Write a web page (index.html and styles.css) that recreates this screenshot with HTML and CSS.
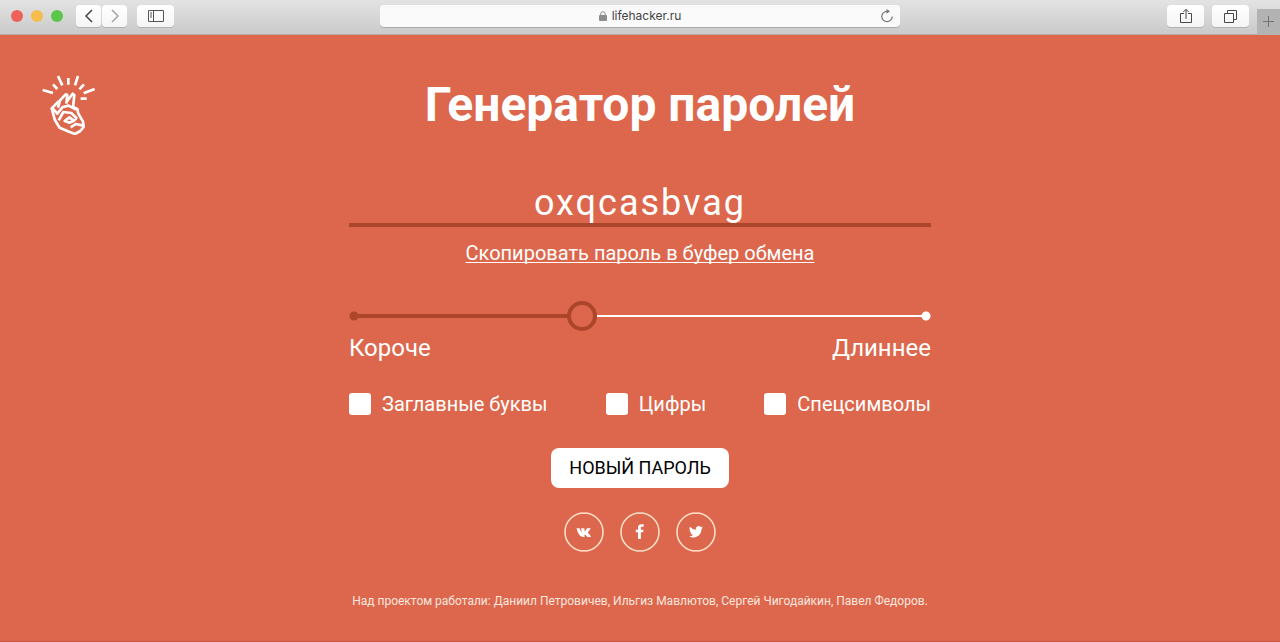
FILE: index.html
```html
<!DOCTYPE html>
<html lang="ru">
<head>
<meta charset="utf-8">
<meta name="viewport" content="width=device-width, initial-scale=1">
<title>Генератор паролей</title>
<link rel="stylesheet" href="styles.css">
</head>
<body>
<div class="toolbar">
  <div class="toolbar-side">
    <div class="lights"><span class="light light-red"></span><span class="light light-yellow"></span><span class="light light-green"></span></div>
    <div class="history">
      <button class="tool tool-small" type="button" aria-label="Назад"><svg width="10" height="14" viewBox="0 0 10 14" fill="none" stroke="#454545" stroke-width="1.5"><path d="M8 1L2 7l6 6"/></svg></button>
      <button class="tool tool-small" type="button" aria-label="Вперёд"><svg width="10" height="14" viewBox="0 0 10 14" fill="none" stroke="#a5a5a5" stroke-width="1.5"><path d="M2 1l6 6-6 6"/></svg></button>
    </div>
    <button class="tool" type="button" aria-label="Боковая панель"><svg width="16" height="13" viewBox="0 0 16 13" fill="none" stroke="#555" stroke-width="1"><path d="M.5.5h15v11H.5zM5.500.5v11M2 3h2M2 5h2M2 7h2"/></svg></button>
  </div>
  <button class="address" type="button">
    <span class="address-text"><svg width="8" height="10" viewBox="0 0 8 10"><rect y="4" width="8" height="6" rx="1" fill="#8c8c8c"/><path d="M1.700 5V3a2.300 2.300 0 0 1 4.600 0v2" fill="none" stroke="#8c8c8c"/></svg>lifehacker.ru</span>
    <svg class="reload" width="14" height="14" viewBox="0 0 14 14" fill="none" stroke="#777" stroke-width="1.200"><path d="M12.200 7.500A5.200 5.200 0 1 1 7 2.300h2"/><path d="M6.500 0L10 2.300 6.500 4.800z" fill="#777" stroke="none"/></svg>
  </button>
  <div class="toolbar-side toolbar-right">
    <button class="tool" type="button" aria-label="Поделиться"><svg width="12" height="16" viewBox="0 0 12 16" fill="none" stroke="#484848"><path d="M4 5.500H.5v9h11v-9H8M6 11V1.500M3.300 4L6 1.300 8.700 4"/></svg></button>
    <button class="tool" type="button" aria-label="Все вкладки"><svg width="13" height="13" viewBox="0 0 13 13" fill="none" stroke="#484848"><path d="M.5 3.500h9v9h-9zM3.500 3.500v-3h9v9h-3"/></svg></button>
    <button class="new-tab" type="button" aria-label="Новая вкладка"><svg width="12" height="12" viewBox="0 0 12 12" stroke="#727272"><path d="M5.500 0v11M0 5.500h11"/></svg></button>
  </div>
</div>
<div class="page">
  <a class="logo" href="#" aria-label="Лайфхакер">
    <svg width="54" height="60" viewBox="6 6 162 180" fill="none" stroke="#fff" stroke-width="8" stroke-linejoin="round">
      <path d="M8 51l31 9M39 34l13 14M54 9l13 28M85 15v20M114 9l-9 28M132 34l-14 15M164 48l-33 13M122 77h18"/>
      <path d="M54 104l6-22 17-18 5 2-3 26M79 88l19-26 5 4-4 38"/>
      <path d="M57 84l-22 22 10 36 14 22 30 13 16 6 16-9 10-12-2-16-14-24-3-14-14-6"/>
      <path d="M38 106l14 16 16-20 18-4 22 12M56 142l14-25 24 3 15 15-7 8"/>
      <path d="M74 144l14-11 14 10-14 6zM92 163l15-10 23 5"/>
    </svg>
  </a>
  <main class="generator">
    <h1 class="title">Генератор паролей</h1>
    <input class="password" type="text" value="oxqcasbvag" aria-label="Пароль" spellcheck="false" readonly>
    <a class="copy" href="#">Скопировать пароль в буфер обмена</a>
    <input class="length" id="length" type="range" min="0" max="200" value="79" aria-label="Длина пароля">
    <div class="length-labels"><label for="length">Короче</label><label for="length">Длиннее</label></div>
    <div class="options">
      <label class="option"><input class="check" type="checkbox">Заглавные буквы</label>
      <label class="option"><input class="check" type="checkbox">Цифры</label>
      <label class="option"><input class="check" type="checkbox">Спецсимволы</label>
    </div>
    <button class="generate" type="button">НОВЫЙ ПАРОЛЬ</button>
    <div class="social">
      <a class="social-link" href="#" aria-label="ВКонтакте"><svg width="40" height="40" viewBox="0 0 40 40"><circle class="ring" cx="20" cy="20" r="19"/><path transform="translate(12.500 16)" d="M0 .3h3L5 4.500V2L4.200.6Q6 0 8 .4V3.600q1.500-1.200 2.500-3.300h3.700q-.6 2.200-3 4.200Q13.500 6.500 14.500 9H11Q9.500 6.800 8 6.500V9H6.500Q2 8.500 0 .3z"/></svg></a>
      <a class="social-link" href="#" aria-label="Facebook"><svg width="40" height="40" viewBox="0 0 40 40"><circle class="ring" cx="20" cy="20" r="19"/><path transform="translate(15.500 12)" d="M2.500 15V8.300H.3V5.700h2.200V3.600C2.500 1.300 3.900.2 6 .2l2.200.1v2.400H6.800c-1.100 0-1.400.5-1.400 1.300v1.700H8l-.4 2.600H5.400V15z"/></svg></a>
      <a class="social-link" href="#" aria-label="Twitter"><svg width="40" height="40" viewBox="0 0 40 40"><circle class="ring" cx="20" cy="20" r="19"/><path transform="translate(13 14) scale(.58)" d="M24 2.500a9.600 9.600 0 0 1-2.800.8A5 5 0 0 0 23.300.6a9.800 9.800 0 0 1-3.100 1.200A4.900 4.900 0 0 0 11.800 6.300 14 14 0 0 1 1.700 1.100a4.900 4.900 0 0 0 1.500 6.600A4.900 4.900 0 0 1 1 7.100a4.900 4.900 0 0 0 3.900 4.900 5 5 0 0 1-2.200.1 4.900 4.900 0 0 0 4.600 3.400A9.900 9.900 0 0 1 0 17.500 14 14 0 0 0 21.500 5.100 10 10 0 0 0 24 2.500z"/></svg></a>
    </div>
    <p class="credits">Над проектом работали: Даниил Петровичев, Ильгиз Мавлютов, Сергей Чигодайкин, Павел Федоров.</p>
  </main>
</div>
</body>
</html>
```
FILE: styles.css
```css
* { box-sizing: border-box; }
body {
  margin: 0;
  min-height: 100vh;
  display: flex;
  flex-direction: column;
  background: #dd674c;
  color: #fff;
  font-family: Roboto, sans-serif;
}
a { color: inherit; }
button { font-family: inherit; border: 0; padding: 0; }

.toolbar {
  display: flex;
  align-items: flex-start;
  height: 35px;
  padding-top: 5px;
  background: linear-gradient(#e3e3e3, #cacaca);
  border-bottom: 1px solid #bfa8a2;
}
.toolbar-side { flex: 1; display: flex; align-items: flex-start; }
.toolbar-right { justify-content: flex-end; gap: 8px; }
.lights { display: flex; gap: 8px; padding: 5px 13px 0 11px; }
.light { width: 12px; height: 12px; border-radius: 50%; }
.light-red { background: #ee6259; }
.light-yellow { background: #f5bd4b; }
.light-green { background: #5ac74b; }
.history { display: flex; gap: 1px; margin-right: 10px; }
.tool {
  display: flex;
  align-items: center;
  justify-content: center;
  width: 37px;
  height: 22px;
  border-radius: 4px;
  background: linear-gradient(#fff, #f5f5f5);
  box-shadow: 0 1px 0 #b2b2b2;
}
.tool-small { width: 25px; }
.address {
  flex: 0 1 520px;
  display: flex;
  align-items: center;
  height: 22px;
  padding: 0 6px 0 20px;
  border-radius: 4px;
  background: #fafafa;
  box-shadow: 0 1px 0 #a9a9a9;
  color: #444;
}
.address-text {
  flex: 1;
  display: flex;
  align-items: center;
  justify-content: center;
  gap: 5px;
  font: 12px/22px Inter, sans-serif;
}
.new-tab {
  display: flex;
  align-items: center;
  justify-content: center;
  width: 23px;
  height: 26px;
  margin-top: 4px;
  background: #b3b3b3;
}

.page {
  flex: 1;
  display: grid;
  grid-template-columns: 1fr minmax(0, 582px) 1fr;
  border-bottom: 1px solid #c0543c;
}
.logo { justify-self: start; align-self: start; margin: 40px 0 0 42px; }
.logo svg { display: block; }
.generator { display: flex; flex-direction: column; align-items: center; }
.title { margin: 40px 0 0; font-size: 48px; line-height: 60px; font-weight: 700; }
.password {
  width: 100%;
  height: 48px;
  margin-top: 44px;
  padding: 4px 0 0;
  border: 0;
  border-bottom: 4px solid #ad452b;
  border-radius: 0;
  outline: 0;
  background: none;
  color: inherit;
  font: 36px/40px Roboto, sans-serif;
  letter-spacing: 2px;
  text-align: center;
}
.copy { margin-top: 14px; font-size: 20px; line-height: 24px; text-decoration-thickness: 1px; text-underline-offset: 2px; text-decoration-skip-ink: none; }
.length {
  appearance: none;
  width: 100%;
  height: 30px;
  margin: 36px 0 0;
  background:
    radial-gradient(circle, #ad452b 4px, transparent 5px) left center / 10px 10px no-repeat,
    radial-gradient(circle, #fff 4px, transparent 5px) right center / 10px 10px no-repeat,
    linear-gradient(#ad452b, #ad452b) 6px center / 38% 4px no-repeat,
    linear-gradient(#fff, #fff) calc(100% - 5px) center / 60% 2px no-repeat;
}
.length::-webkit-slider-thumb {
  appearance: none;
  width: 30px;
  height: 30px;
  border: 4px solid #ad452b;
  border-radius: 50%;
  background: #dd674c;
}
.length-labels {
  width: 100%;
  display: flex;
  justify-content: space-between;
  margin-top: 3px;
  font-size: 24px;
  line-height: 28px;
}
.options {
  width: 100%;
  display: flex;
  flex-wrap: wrap;
  justify-content: space-between;
  gap: 12px;
  margin-top: 29px;
  font-size: 20px;
  line-height: 26px;
}
.option { display: flex; align-items: center; gap: 11px; }
.check { appearance: none; width: 22px; height: 22px; margin: 0; border-radius: 3px; background: #fff; }
.check:checked { box-shadow: inset 0 0 0 6px #fff; background: #ad452b; }
.generate {
  margin-top: 31px;
  padding: 0 18px;
  border-radius: 8px;
  background: #fff;
  color: #000;
  font-size: 18px;
  line-height: 40px;
}
.social { display: flex; gap: 16px; margin-top: 24px; }
.social-link svg { display: block; fill: #fff; }
.ring { fill: none; stroke: #ffe3cb; stroke-width: 1.5; }
.credits { margin: 40px 0 0; font-size: 12px; line-height: 18px; color: #fbe6df; }
```
